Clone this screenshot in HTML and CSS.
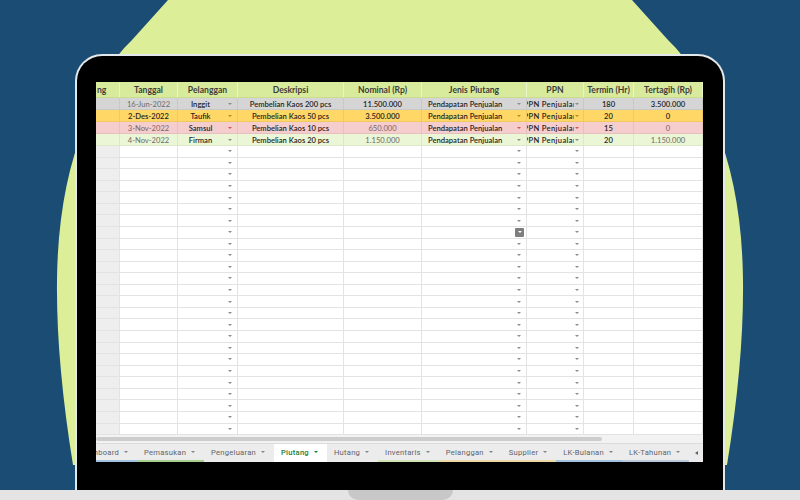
FILE: index.html
```html
<!DOCTYPE html>
<html lang="id">
<head>
    <meta charset="UTF-8">
    <meta name="viewport" content="width=device-width, initial-scale=1.0">
    <title>Piutang</title>
    <link rel="stylesheet" href="styles.css">
</head>
<body>
    <div class="stage">
        <svg class="blob" width="800" height="500" viewBox="0 0 800 500">
            <path d="M168,0 L132,40 Q100,70 85,125 Q58,190 57,280 Q56,360 73,465 L727,465 Q744,360 743,280 Q742,190 715,125 Q700,70 668,40 L632,0 Z" fill="#dcee98"/>
        </svg>

        <div class="laptop">
            <div class="screen">
                <div class="sheet">
                    <div class="row head">
                        <div class="cell num">ng</div>
                        <div class="cell">Tanggal</div>
                        <div class="cell">Pelanggan</div>
                        <div class="cell">Deskripsi</div>
                        <div class="cell">Nominal (Rp)</div>
                        <div class="cell">Jenis Piutang</div>
                        <div class="cell">PPN</div>
                        <div class="cell">Termin (Hr)</div>
                        <div class="cell">Tertagih (Rp)</div>
                    </div>

                    <div class="row data gray">
                        <div class="cell num"></div>
                        <div class="cell dim">16-Jun-2022</div>
                        <div class="cell pick"><span class="val dk">Inggit</span><i class="arr"></i></div>
                        <div class="cell dk">Pembelian Kaos 200 pcs</div>
                        <div class="cell dk">11.500.000</div>
                        <div class="cell pick left"><span class="val dk">Pendapatan Penjualan</span><i class="arr"></i></div>
                        <div class="cell pick ppn"><span class="val dk">PPN Penjualan</span><i class="arr"></i></div>
                        <div class="cell dk">180</div>
                        <div class="cell dk">3.500.000</div>
                    </div>

                    <div class="row data yellow">
                        <div class="cell num"></div>
                        <div class="cell dk">2-Des-2022</div>
                        <div class="cell pick"><span class="val dk">Taufik</span><i class="arr"></i></div>
                        <div class="cell dk">Pembelian Kaos 50 pcs</div>
                        <div class="cell dk">3.500.000</div>
                        <div class="cell pick left"><span class="val dk">Pendapatan Penjualan</span><i class="arr"></i></div>
                        <div class="cell pick ppn"><span class="val dk">PPN Penjualan</span><i class="arr"></i></div>
                        <div class="cell dk">20</div>
                        <div class="cell dk">0</div>
                    </div>

                    <div class="row data pink">
                        <div class="cell num"></div>
                        <div class="cell dim">3-Nov-2022</div>
                        <div class="cell pick"><span class="val dk">Samsul</span><i class="arr"></i></div>
                        <div class="cell dk">Pembelian Kaos 10 pcs</div>
                        <div class="cell dim">650.000</div>
                        <div class="cell pick left"><span class="val dk">Pendapatan Penjualan</span><i class="arr"></i></div>
                        <div class="cell pick ppn"><span class="val dk">PPN Penjualan</span><i class="arr"></i></div>
                        <div class="cell dk">15</div>
                        <div class="cell dim">0</div>
                    </div>

                    <div class="row data green">
                        <div class="cell num"></div>
                        <div class="cell dim">4-Nov-2022</div>
                        <div class="cell pick"><span class="val dk">Firman</span><i class="arr"></i></div>
                        <div class="cell dk">Pembelian Kaos 20 pcs</div>
                        <div class="cell dim">1.150.000</div>
                        <div class="cell pick left"><span class="val dk">Pendapatan Penjualan</span><i class="arr"></i></div>
                        <div class="cell pick ppn"><span class="val dk">PPN Penjualan</span><i class="arr"></i></div>
                        <div class="cell dk">20</div>
                        <div class="cell dim">1.150.000</div>
                    </div>

                    <div class="empty" id="empty"></div>
                </div>

                <div class="hscroll"><div class="thumb"></div></div>

                <div class="tabs">
                    <div class="tab-list">
                        <div class="tab first c-blue">Dashboard <i class="caret"></i></div>
                        <div class="tab c-green">Pemasukan <i class="caret"></i></div>
                        <div class="tab">Pengeluaran <i class="caret"></i></div>
                        <div class="tab active">Piutang <i class="caret"></i></div>
                        <div class="tab">Hutang <i class="caret"></i></div>
                        <div class="tab c-lime">Inventaris <i class="caret"></i></div>
                        <div class="tab c-gold">Pelanggan <i class="caret"></i></div>
                        <div class="tab c-gold">Supplier <i class="caret"></i></div>
                        <div class="tab c-blue">LK-Bulanan <i class="caret"></i></div>
                        <div class="tab c-steel">LK-Tahunan <i class="caret"></i></div>
                    </div>
                    <div class="tab-nav"><i></i></div>
                </div>
            </div>
        </div>

        <div class="base"><div class="notch"></div></div>
    </div>

    <script>
        // baris kosong dengan dropdown di kolom Pelanggan, Jenis Piutang dan PPN
        const empty = document.getElementById("empty");
        for (let i = 0; i < 25; i++) {
            const row = document.createElement("div");
            row.className = "row";
            row.innerHTML =
                '<div class="cell num"></div>' +
                '<div class="cell"></div>' +
                '<div class="cell pick"><span class="val"></span><i class="arr"></i></div>' +
                '<div class="cell"></div>' +
                '<div class="cell"></div>' +
                '<div class="cell pick left"><span class="val"></span><i class="arr' + (i === 7 ? ' on' : '') + '"></i></div>' +
                '<div class="cell pick ppn"><span class="val"></span><i class="arr"></i></div>' +
                '<div class="cell"></div>' +
                '<div class="cell"></div>';
            empty.appendChild(row);
        }
    </script>
</body>
</html>
```

FILE: styles.css
```css
* {
    box-sizing: border-box;
}
body {
    margin: 0;
    background: #1b4c74;
    font-family: Lato, "Open Sans", sans-serif;
}
.stage {
    position: relative;
    width: 800px;
    height: 500px;
    display: flex;
    flex-direction: column;
    overflow: hidden;
}
.blob {
    position: absolute;
    left: 0;
    top: 0;
}
.laptop {
    position: relative;
    flex: 1;
    display: flex;
    margin: 54px 75px 0;
    padding: 26px 20px 28px 19px;
    background: #000;
    border: 2px solid #e3e8ea;
    border-bottom: none;
    border-radius: 27px 27px 0 0;
}
.screen {
    flex: 1;
    display: flex;
    flex-direction: column;
    background: #fff;
    overflow: hidden;
}
.sheet {
    flex: 1;
    display: flex;
    flex-direction: column;
}
.row {
    display: grid;
    grid-template-columns: 24px 58px 60px 106px 78px 105px 57px 50px 69px;
}
.cell {
    display: flex;
    align-items: center;
    justify-content: center;
    overflow: hidden;
    white-space: nowrap;
    font-size: 7.6px;
    color: #262626;
    border-right: 1px solid #e3e3e3;
    border-bottom: 1px solid #e3e3e3;
}
.num {
    background: #eeeeee;
    justify-content: flex-start;
    padding-left: 1px;
}

/* header */
.head {
    height: 16px;
    background: #d8eb9c;
}
.head .cell {
    font-size: 8.6px;
    font-weight: 700;
    color: #3d3d3d;
    border-color: rgba(255, 255, 255, 0.45);
    border-bottom-color: #cbdc90;
}
.head .num {
    background: transparent;
}

/* baris data */
.data {
    height: 12px;
}
.data .cell {
    border-color: rgba(0, 0, 0, 0.06);
}
.data .num {
    background: transparent;
}
.gray { background: #d5d5d5; }
.yellow { background: #ffd766; }
.pink { background: #f5cdcd; }
.green { background: #ebf6d6; }
.dk {
    color: #1f1f1f;
    font-weight: 600;
}
.dim {
    color: #6b6b6b;
}
.pink .dim {
    color: #7d6464;
}

/* dropdown */
.pick {
    justify-content: flex-start;
}
.val {
    flex: 1;
    min-width: 0;
    height: 100%;
    display: flex;
    align-items: center;
    justify-content: center;
    overflow: hidden;
}
.left .val {
    justify-content: flex-start;
    padding-left: 6px;
}
.ppn .val {
    letter-spacing: 0.35px;
}
.arr {
    flex: none;
    width: 14px;
    height: 100%;
    display: flex;
    align-items: center;
    justify-content: center;
}
.arr::before {
    content: "";
    border-left: 2px solid transparent;
    border-right: 2px solid transparent;
    border-top: 2.5px solid #8c8c8c;
}
.ppn .arr {
    width: 9px;
    justify-content: flex-start;
    padding-left: 1px;
}
.yellow .arr::before { border-top-color: #b58b1e; }
.pink .arr::before { border-top-color: #d9534f; }
.arr.on {
    width: 9px;
    height: 9px;
    margin: auto 2px auto 3px;
    background: #7e7e7e;
    border-radius: 1px;
}
.arr.on::before {
    border-top-color: #fff;
}

.empty {
    flex: 1;
    display: flex;
    flex-direction: column;
}
.empty .row {
    flex: 1;
}

/* scrollbar */
.hscroll {
    height: 8px;
    padding: 2px 0;
    background: #f2f2f2;
}
.thumb {
    width: 506px;
    height: 4px;
    background: #cdcdcd;
    border-radius: 2px;
}

/* tab sheet */
.tabs {
    height: 19px;
    display: flex;
    background: #ececec;
    border-top: 1px solid #dcdcdc;
    font-family: Roboto, "Liberation Sans", sans-serif;
    font-size: 7.6px;
    letter-spacing: 0.25px;
    color: #5f6368;
}
.tab-list {
    flex: 1;
    display: flex;
    overflow: hidden;
}
.tab {
    flex: none;
    display: flex;
    align-items: center;
    gap: 5px;
    padding: 0 9px 0 7px;
    border-bottom: 2px solid transparent;
}
.tab.first {
    margin-left: -23px;
}
.tab.active {
    background: #fff;
    color: #188038;
    font-weight: 500;
}
.c-blue { border-bottom-color: #9fc0de; }
.c-green { border-bottom-color: #a8cf8e; }
.c-lime { border-bottom-color: #cfe3b5; }
.c-gold { border-bottom-color: #ecd9a3; }
.c-steel { border-bottom-color: #b7c9da; }
.caret {
    border-left: 2px solid transparent;
    border-right: 2px solid transparent;
    border-top: 2.5px solid #80868b;
}
.active .caret {
    border-top-color: #188038;
}
.tab-nav {
    flex: none;
    width: 13px;
    display: flex;
    align-items: center;
    justify-content: center;
}
.tab-nav i {
    border-top: 2.5px solid transparent;
    border-bottom: 2.5px solid transparent;
    border-right: 3px solid #5f6368;
}

/* alas laptop */
.base {
    height: 10px;
    display: flex;
    justify-content: center;
    background: #e4e4e4;
}
.notch {
    width: 105px;
    height: 10px;
    background: #c8c8c8;
    border-radius: 0 0 10px 10px;
}
```
